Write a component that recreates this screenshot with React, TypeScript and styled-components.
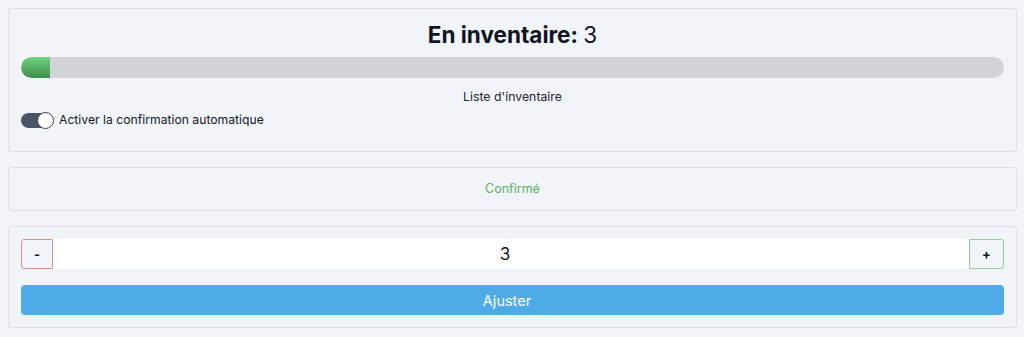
import React, { useState } from "react";
import styled, { createGlobalStyle } from "styled-components";

const GlobalStyle = createGlobalStyle`
  body {
    margin: 0;
    background: #f1f4f9;
    font-family: Inter, "Noto Sans", sans-serif;
    color: #111827;
  }
`;

const Page = styled.div`
  padding: 8px 7px 8px 8px;
  display: flex;
  flex-direction: column;
  gap: 15px;
`;

const Card = styled.section`
  border: 1px solid #dde1e6;
  border-radius: 3px;
  padding: 12px;
  display: flex;
  flex-direction: column;
`;

const Title = styled.h2`
  margin: 0;
  text-align: center;
  font-size: 22.5px;
  line-height: 28px;
  font-weight: 700;
  color: #0f1322;

  span {
    font-weight: 400;
  }
`;

const Track = styled.div`
  margin-top: 8px;
  height: 21px;
  border-radius: 11px;
  background: #d1d5da;
  overflow: hidden;
`;

const Fill = styled.div`
  height: 100%;
  background: linear-gradient(#72d27f, #3f8f4c);
  border-radius: 11px 0 0 11px;
`;

const Caption = styled.div`
  margin-top: 10px;
  text-align: center;
  font-size: 12.3px;
  line-height: 18px;
  color: #1f2430;
`;

const ToggleRow = styled.label`
  margin-top: 5px;
  margin-bottom: 10px;
  display: flex;
  align-items: center;
  gap: 6px;
  font-size: 12.2px;
  line-height: 18px;
  color: #111827;
`;

const Switch = styled.span<{ $on: boolean }>`
  position: relative;
  width: 32px;
  height: 15px;
  border-radius: 8px;
  background: ${(p) => (p.$on ? "#4a5568" : "#c9ced6")};

  &::after {
    content: "";
    position: absolute;
    top: -1px;
    left: ${(p) => (p.$on ? "16px" : "0")};
    width: 15px;
    height: 15px;
    border-radius: 50%;
    background: #fff;
    border: 1px solid #3b4252;
  }
`;

const Status = styled.div`
  text-align: center;
  font-size: 12.5px;
  line-height: 18px;
  color: #5cb365;
`;

const Stepper = styled.div`
  display: flex;
  height: 30px;
`;

const StepButton = styled.button<{ $tone: "minus" | "plus" }>`
  width: ${(p) => (p.$tone === "minus" ? "32px" : "35px")};
  height: 30px;
  padding: 0;
  background: #f1f4f9;
  border: 1px solid ${(p) => (p.$tone === "minus" ? "#e08d88" : "#8fcb93")};
  border-radius: ${(p) => (p.$tone === "minus" ? "3px 0 0 3px" : "0 3px 3px 0")};
  font-family: Inter, sans-serif;
  font-size: 13px;
  font-weight: 700;
  color: #111827;
`;

const Value = styled.input`
  flex: 1;
  min-width: 0;
  padding: 0 12px 0 0;
  border: none;
  background: #fff;
  text-align: center;
  font-family: Inter, sans-serif;
  font-size: 17px;
  color: #111827;
  outline: none;
`;

const Submit = styled.button`
  margin-top: 16px;
  height: 30px;
  padding: 0 11px 0 0;
  border: none;
  border-radius: 4px;
  background: #4fabe8;
  color: #fff;
  font-family: Inter, sans-serif;
  font-size: 14.5px;
`;

export default function App() {
  const [count, setCount] = useState(3);
  const [auto, setAuto] = useState(true);

  return (
    <>
      <GlobalStyle />
      <Page>
        <Card>
          <Title>
            En inventaire: <span>{count}</span>
          </Title>
          <Track>
            <Fill style={{ width: `${count}%` }} />
          </Track>
          <Caption>Liste d'inventaire</Caption>
          <ToggleRow onClick={() => setAuto(!auto)}>
            <Switch $on={auto} />
            Activer la confirmation automatique
          </ToggleRow>
        </Card>
        <Card>
          <Status>Confirmé</Status>
        </Card>
        <Card>
          <Stepper>
            <StepButton $tone="minus" onClick={() => setCount(count - 1)}>
              -
            </StepButton>
            <Value value={count} readOnly />
            <StepButton $tone="plus" onClick={() => setCount(count + 1)}>
              +
            </StepButton>
          </Stepper>
          <Submit>Ajuster</Submit>
        </Card>
      </Page>
    </>
  );
}
